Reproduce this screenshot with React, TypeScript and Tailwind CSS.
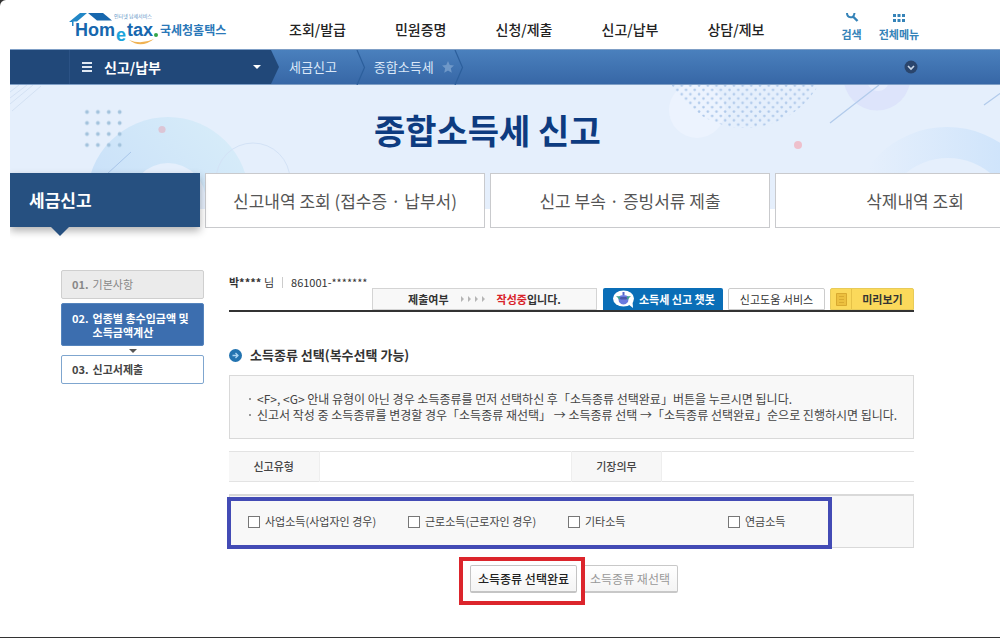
import { useState } from 'react';

const MENUS = ['조회/발급', '민원증명', '신청/제출', '신고/납부', '상담/제보'];

const TABS = ['신고내역 조회 (접수증 · 납부서)', '신고 부속 · 증빙서류 제출', '삭제내역 조회'];

const INCOME_TYPES = [
  { id: 'business', label: '사업소득(사업자인 경우)' },
  { id: 'labor', label: '근로소득(근로자인 경우)' },
  { id: 'etc', label: '기타소득' },
  { id: 'pension', label: '연금소득' },
];

function Logo() {
  return (
    <svg width="162" height="34" viewBox="69 13 162 34" role="img" aria-label="Hometax 국세청홈택스">
      <path d="M69 22 L80 13 H87 L77 21.500 H73.500 V26 H72 V22 Z" fill="#2287c6" />
      <path d="M88 13 H103 L112 20.500 H97 Z" fill="#1767ae" />
      <text x="114" y="18" fontSize="5" fill="#5b93c4">
        인터넷 납세서비스
      </text>
      <g fontFamily="'Liberation Sans', sans-serif" fontWeight="700">
        <text x="75" y="36" fontSize="18" fill="#1767ae">
          Hom
        </text>
        <text x="116" y="41" fontSize="18" fill="#1ba5dc">
          e
        </text>
        <text x="127" y="36" fontSize="18" fill="#1767ae">
          tax
        </text>
      </g>
      <circle cx="156" cy="35" r="2" fill="#33a648" />
      <path d="M129 40 Q141 49 154 39 Q141 45 129 40 Z" fill="#f0b252" />
      <text x="160" y="35" fontSize="12" fontWeight="700" fill="#2b78b8">
        국세청홈택스
      </text>
    </svg>
  );
}

function Header() {
  return (
    <header className="flex h-9 items-start pl-[59px]">
      <a href="#home" className="mr-[58px] shrink-0">
        <Logo />
      </a>
      <nav className="flex shrink-0 gap-[49px] pt-1 text-[14px] leading-6 font-medium text-[#222]">
        {MENUS.map((menu) => (
          <a key={menu} href="#menu">
            {menu}
          </a>
        ))}
      </nav>
      <div className="ml-[77px] flex shrink-0 gap-[17px] text-[11px] leading-4 font-bold text-[#3583b8]">
        <button type="button" className="flex flex-col items-center gap-1">
          <svg width="14" height="9" viewBox="0 0 14 9" fill="none" stroke="currentColor">
            <path d="M2 0 C2 5 9 6.500 9.500 0" strokeWidth="2" />
            <path d="M8 3.500 L12.500 8" strokeWidth="2.400" />
          </svg>
          검색
        </button>
        <button type="button" className="flex flex-col items-center gap-1">
          <svg width="14" height="9" viewBox="0 0 14 9" fill="currentColor">
            <path d="M1 1h3v3h-3z M5.500 1h3v3h-3z M10 1h3v3h-3z M1 6h3v3h-3z M5.500 6h3v3h-3z M10 6h3v3h-3z" />
          </svg>
          전체메뉴
        </button>
      </div>
    </header>
  );
}

function Divider() {
  return (
    <svg width="10" height="35" viewBox="0 0 10 35" fill="none" stroke="#2c5f9c" strokeWidth="1.200">
      <path d="M1 0 L8.500 17.500 L1 35" />
    </svg>
  );
}

function Breadcrumb() {
  return (
    <div className="flex h-9 items-center border-y border-[#7f9fc6] bg-linear-to-b from-[#4a80bd] to-[#3767a6] text-[13px] text-[#dbe8f8]">
      <div className="flex h-full w-[269px] shrink-0 items-center bg-[#214879] [clip-path:polygon(0_0,calc(100%-8px)_0,100%_50%,calc(100%-8px)_100%,0_100%)]">
        <button
          type="button"
          className="ml-[59px] flex h-full flex-1 items-center border-l border-[#2b5285] pr-[18px] pl-3 text-left text-[14px] font-bold text-white"
        >
          <svg width="10" height="10" viewBox="0 0 10 10" fill="#dfe8f3" className="mr-3">
            <path d="M0 0h10v2H0z M0 4h10v2H0z M0 8h10v2H0z" />
          </svg>
          신고/납부
          <svg width="8" height="4" viewBox="0 0 8 4" fill="#fff" className="ml-auto">
            <path d="M0 0h8L4 4z" />
          </svg>
        </button>
      </div>
      <a href="#tax" className="mr-[19px] ml-[10px]">
        세금신고
      </a>
      <Divider />
      <a href="#income" className="mr-2 ml-2">
        종합소득세
      </a>
      <svg width="12" height="12" viewBox="0 0 24 24" fill="#6f98c8">
        <path d="M12 0 L15.500 8 L24 9 L17.700 14.700 L19.500 23.500 L12 19 L4.500 23.500 L6.300 14.700 L0 9 L8.500 8 Z" />
      </svg>
      <Divider />
      <button type="button" aria-label="메뉴 펼치기" className="mr-[82px] ml-auto">
        <svg width="14" height="14" viewBox="0 0 14 14" fill="none">
          <circle cx="7" cy="7" r="6.500" fill="#2a456c" />
          <path d="M4 6 L7 9 L10 6" stroke="#cbd8e8" strokeWidth="1.600" />
        </svg>
      </button>
    </div>
  );
}

function BannerArt() {
  return (
    <svg
      className="absolute inset-x-0 top-0 h-[124px] w-full bg-[#e5effc]"
      viewBox="10 85 990 124"
      preserveAspectRatio="xMinYMin slice"
      aria-hidden="true"
    >
      <defs>
        <linearGradient id="ringLeft" x1="0" y1="1" x2="1" y2="0">
          <stop offset="0" stopColor="#c3dbf9" />
          <stop offset="1" stopColor="#d9eef9" />
        </linearGradient>
        <linearGradient id="ringRight">
          <stop offset="0.100" stopColor="#e5effc" />
          <stop offset="0.800" stopColor="#cfe4fb" />
        </linearGradient>
        <pattern id="gridDots" x="81.500" y="106.500" width="10.900" height="11" patternUnits="userSpaceOnUse">
          <circle cx="5.500" cy="5.500" r="1.900" fill="#a3c3dd" />
        </pattern>
        <pattern id="domeDots" x="671" y="83" width="8.700" height="8.700" patternUnits="userSpaceOnUse">
          <circle cx="2" cy="2.500" r="1.300" fill="#afc9ea" />
          <circle cx="6.350" cy="6.850" r="1.300" fill="#afc9ea" />
        </pattern>
      </defs>
      <path d="M10 92 L19 85 M10 98 L27 85 M10 104 L33 85 M12 111 L41 86" stroke="#d3e1f3" fill="none" />
      <circle cx="168" cy="198" r="81" fill="url(#ringLeft)" />
      <circle cx="168" cy="201" r="38" fill="#e5effc" />
      <rect x="81.500" y="106.500" width="43.600" height="44" fill="url(#gridDots)" />
      <circle cx="162" cy="129.500" r="3.600" fill="#dcc5d5" />
      <path d="M107 174 L131 152" stroke="#a9c6ea" />
      <circle cx="253" cy="180" r="37" fill="none" stroke="#d3e2f6" />
      <circle cx="697" cy="110" r="28" fill="#ecf3fe" />
      <circle cx="745" cy="44" r="84" fill="url(#domeDots)" />
      <circle cx="877" cy="77" r="33.500" fill="#dde4fb" />
      <circle cx="878" cy="80" r="11" fill="#e7eefd" />
      <path d="M830 123 L879 85 M984 105 L1002 92" stroke="#b2cbeb" strokeWidth="1.300" />
      <circle cx="798" cy="145" r="4" fill="#eec0cc" />
      <circle cx="947" cy="224" r="97" fill="url(#ringRight)" />
      <circle cx="948" cy="224" r="66" fill="#e5effc" />
    </svg>
  );
}

function Banner() {
  return (
    <section className="relative">
      <BannerArt />
      <h1 className="relative flex h-[88px] items-center pl-[364px] text-[34px] font-bold text-[#0d3b80]">
        종합소득세 신고
      </h1>
      <nav className="relative flex gap-[5px] overflow-x-clip text-[17px]">
        <a
          href="#file"
          className="relative flex h-[54px] w-[190px] shrink-0 items-center bg-[#265080] pl-[19px] font-bold text-white shadow-[0_4px_8px_rgba(0,0,0,0.3)]"
        >
          세금신고
          <svg className="absolute top-full left-[41px]" width="18" height="9" viewBox="0 0 18 9" fill="#265080">
            <path d="M0 0h18L9 9z" />
          </svg>
        </a>
        {TABS.map((tab) => (
          <a
            key={tab}
            href="#tab"
            className="flex h-[55px] w-[280px] shrink-0 items-center justify-center border border-[#c9cacd] bg-white text-[#555]"
          >
            {tab}
          </a>
        ))}
      </nav>
    </section>
  );
}

function Steps() {
  return (
    <ol className="flex w-[143px] shrink-0 flex-col text-[11px] font-bold">
      <li className="mb-1 flex h-[29px] items-center gap-1 rounded-xs border border-[#cfcfcf] bg-[#ebebeb] px-[10px] text-[#888]">
        <span>01.</span> <span className="font-normal">기본사항</span>
      </li>
      <li className="flex h-[43px] items-center gap-1 rounded-xs border border-[#5584bd] bg-[#3c6eaf] px-[10px] leading-[14px] text-white">
        <span className="self-start pt-[7px]">02.</span>
        <span>
          업종별 총수입금액 및<br />
          소득금액계산
        </span>
      </li>
      <li className="flex h-[9px] items-center justify-center" aria-hidden="true">
        <svg width="8" height="4" viewBox="0 0 8 4" fill="#555">
          <path d="M0 0h8L4 4z" />
        </svg>
      </li>
      <li className="flex h-[29px] items-center gap-1 rounded-xs border border-[#7fa6cf] bg-white px-[10px] text-[#444]">
        <span>03.</span> <span>신고서제출</span>
      </li>
    </ol>
  );
}

function Toolbar() {
  return (
    <div className="flex h-[42px] items-end justify-end border-b-2 border-[#333] text-[11px] text-[#333]">
      <p className="mr-auto flex items-center gap-2 self-start pt-1 leading-4">
        <span>
          <b>박****</b> 님
        </span>
        <span className="h-[11px] border-l border-[#ccc]" />
        <span>861001-*******</span>
      </p>
      <p className="mr-[6px] flex h-[22px] w-[225px] items-center justify-center gap-3 border border-[#d4d4d4] bg-[#f8f8f8] font-bold">
        제출여부
        <svg width="24" height="6" viewBox="0 0 24 6" fill="#b5b5b5">
          <path d="M0 0l3 3-3 3z M7 0l3 3-3 3z M14 0l3 3-3 3z M21 0l3 3-3 3z" />
        </svg>
        <span>
          <span className="text-[#d8232a]">작성중</span>입니다.
        </span>
      </p>
      <button
        type="button"
        className="mr-[5px] flex h-[22px] w-[120px] items-center gap-1 rounded-t-xs bg-[#0a6eb7] pl-[10px] font-bold whitespace-nowrap text-white"
      >
        <svg width="22" height="18" viewBox="0 0 22 18">
          <ellipse cx="10.500" cy="8.500" rx="10.500" ry="8" fill="#fff" />
          <path d="M15 14 L20 18 L19.500 11 Z" fill="#fff" />
          <path d="M5 7 Q10.500 3 16 7 L15 12 Q10.500 17 6 12 Z" fill="#6a7ae0" />
          <path d="M3 6 L7 6.500 L7 10 Z M18 6 L14 6.500 L14 10 Z" fill="#3fa58c" />
          <path d="M10.500 2v3" stroke="#5565c8" strokeWidth="2" />
          <rect x="7" y="7" width="7" height="2.500" rx="1.200" fill="#4a58a8" />
        </svg>
        소득세 신고 챗봇
      </button>
      <button
        type="button"
        className="mr-[5px] h-[22px] w-[97px] rounded-t-xs border border-[#ccc] bg-white whitespace-nowrap"
      >
        신고도움 서비스
      </button>
      <button
        type="button"
        className="flex h-[22px] w-[84px] items-center rounded-t-xs border border-[#e8cb58] bg-[#fbd95b] font-bold"
      >
        <span className="flex h-full w-[21px] items-center justify-center border-r border-[#e6c248]">
          <svg width="11" height="13" viewBox="0 0 11 13" fill="#ecc03f" stroke="#d9aa30">
            <path d="M0.500 0.500h10v12h-10z M3 3.500h5 M3 6.500h5 M3 9.500h5" />
          </svg>
        </span>
        <span className="flex-1">미리보기</span>
      </button>
    </div>
  );
}

export default function App() {
  const [selected, setSelected] = useState<string[]>([]);

  function toggle(id: string) {
    setSelected((prev) => (prev.includes(id) ? prev.filter((v) => v !== id) : [...prev, id]));
  }

  return (
    <div className="flex min-h-screen flex-col overflow-x-clip bg-[#333] pb-px font-['Noto_Sans_CJK_KR','Noto_Sans',sans-serif]">
      <div className="flex-1 rounded-tl-md bg-white pt-[13px] pl-[10px]">
        <Header />
        <Breadcrumb />
        <Banner />

        <div className="flex gap-[25px] pt-[42px] pr-[86px] pl-[51px]">
          <Steps />

          <main className="min-w-0 flex-1">
            <Toolbar />

            <h2 className="mt-[33px] flex items-center gap-2 text-[13px] leading-5 font-bold text-[#333]">
              <svg width="13" height="13" viewBox="0 0 13 13" fill="none">
                <circle cx="6.500" cy="6.500" r="6.500" fill="#2273b0" />
                <path d="M3.500 6.500h5.500 M6.500 4l2.500 2.500-2.500 2.500" stroke="#a9d4f2" strokeWidth="1.300" />
              </svg>
              소득종류 선택(복수선택 가능)
            </h2>

            <ul className="mt-[10px] flex h-16 flex-col justify-center border border-[#d9d9d9] bg-[#f8f8f8] pl-[19px] text-[12px] leading-4 whitespace-nowrap text-[#444]">
              <li className="flex items-center gap-[6px]">
                <span className="size-[2px] bg-[#999]" />
                &lt;F&gt;, &lt;G&gt; 안내 유형이 아닌 경우 소득종류를 먼저 선택하신 후「소득종류 선택완료」버튼을 누르시면 됩니다.
              </li>
              <li className="flex items-center gap-[6px]">
                <span className="size-[2px] bg-[#999]" />
                신고서 작성 중 소득종류를 변경할 경우「소득종류 재선택」 → 소득종류 선택 →「소득종류 선택완료」순으로 진행하시면 됩니다.
              </li>
            </ul>

            <table className="mt-3 h-[31px] w-full table-fixed border-y border-[#e3e3e3] text-[11px] text-[#444]">
              <tbody>
                <tr>
                  <th className="w-[90px] border-r border-[#eee] bg-[#f7f7f7] font-medium">신고유형</th>
                  <td />
                  <th className="w-[90px] border-x border-[#eee] bg-[#f7f7f7] font-medium">기장의무</th>
                  <td />
                </tr>
              </tbody>
            </table>

            <div className="relative mt-3 flex h-[54px] items-center border border-t-2 border-[#d9d9d9] bg-[#f8f8f8] pl-[18px] text-[11px] text-[#444]">
              {INCOME_TYPES.map(({ id, label }) => (
                <label key={id} className="flex w-40 items-center gap-[5px] whitespace-nowrap">
                  <input
                    type="checkbox"
                    checked={selected.includes(id)}
                    onChange={() => toggle(id)}
                    className="size-3 appearance-none border border-[#777] bg-white checked:bg-[#3c6eaf]"
                  />
                  {label}
                </label>
              ))}
              <span className="pointer-events-none absolute top-px -bottom-[2px] -left-[3px] w-[605px] border-4 border-[#434bb5]" />
            </div>

            <div className="mt-[17px] ml-[241px] flex gap-[5px] text-[12px]">
              <div className="relative">
                <button
                  type="button"
                  className="h-7 w-[107px] rounded-xs border border-b-2 border-[#c4c4c4] bg-linear-to-b from-white to-[#f4f4f4] font-medium whitespace-nowrap text-[#222]"
                >
                  소득종류 선택완료
                </button>
                <span className="pointer-events-none absolute -top-2 -right-2 -bottom-3 -left-[11px] border-4 border-[#dc252c]" />
              </div>
              <button
                type="button"
                onClick={() => setSelected([])}
                className="h-7 w-24 rounded-xs border border-b-2 border-[#c8c8c8] bg-linear-to-b from-white to-[#f4f4f4] whitespace-nowrap text-[#999]"
              >
                소득종류 재선택
              </button>
            </div>
          </main>
        </div>
      </div>
    </div>
  );
}
